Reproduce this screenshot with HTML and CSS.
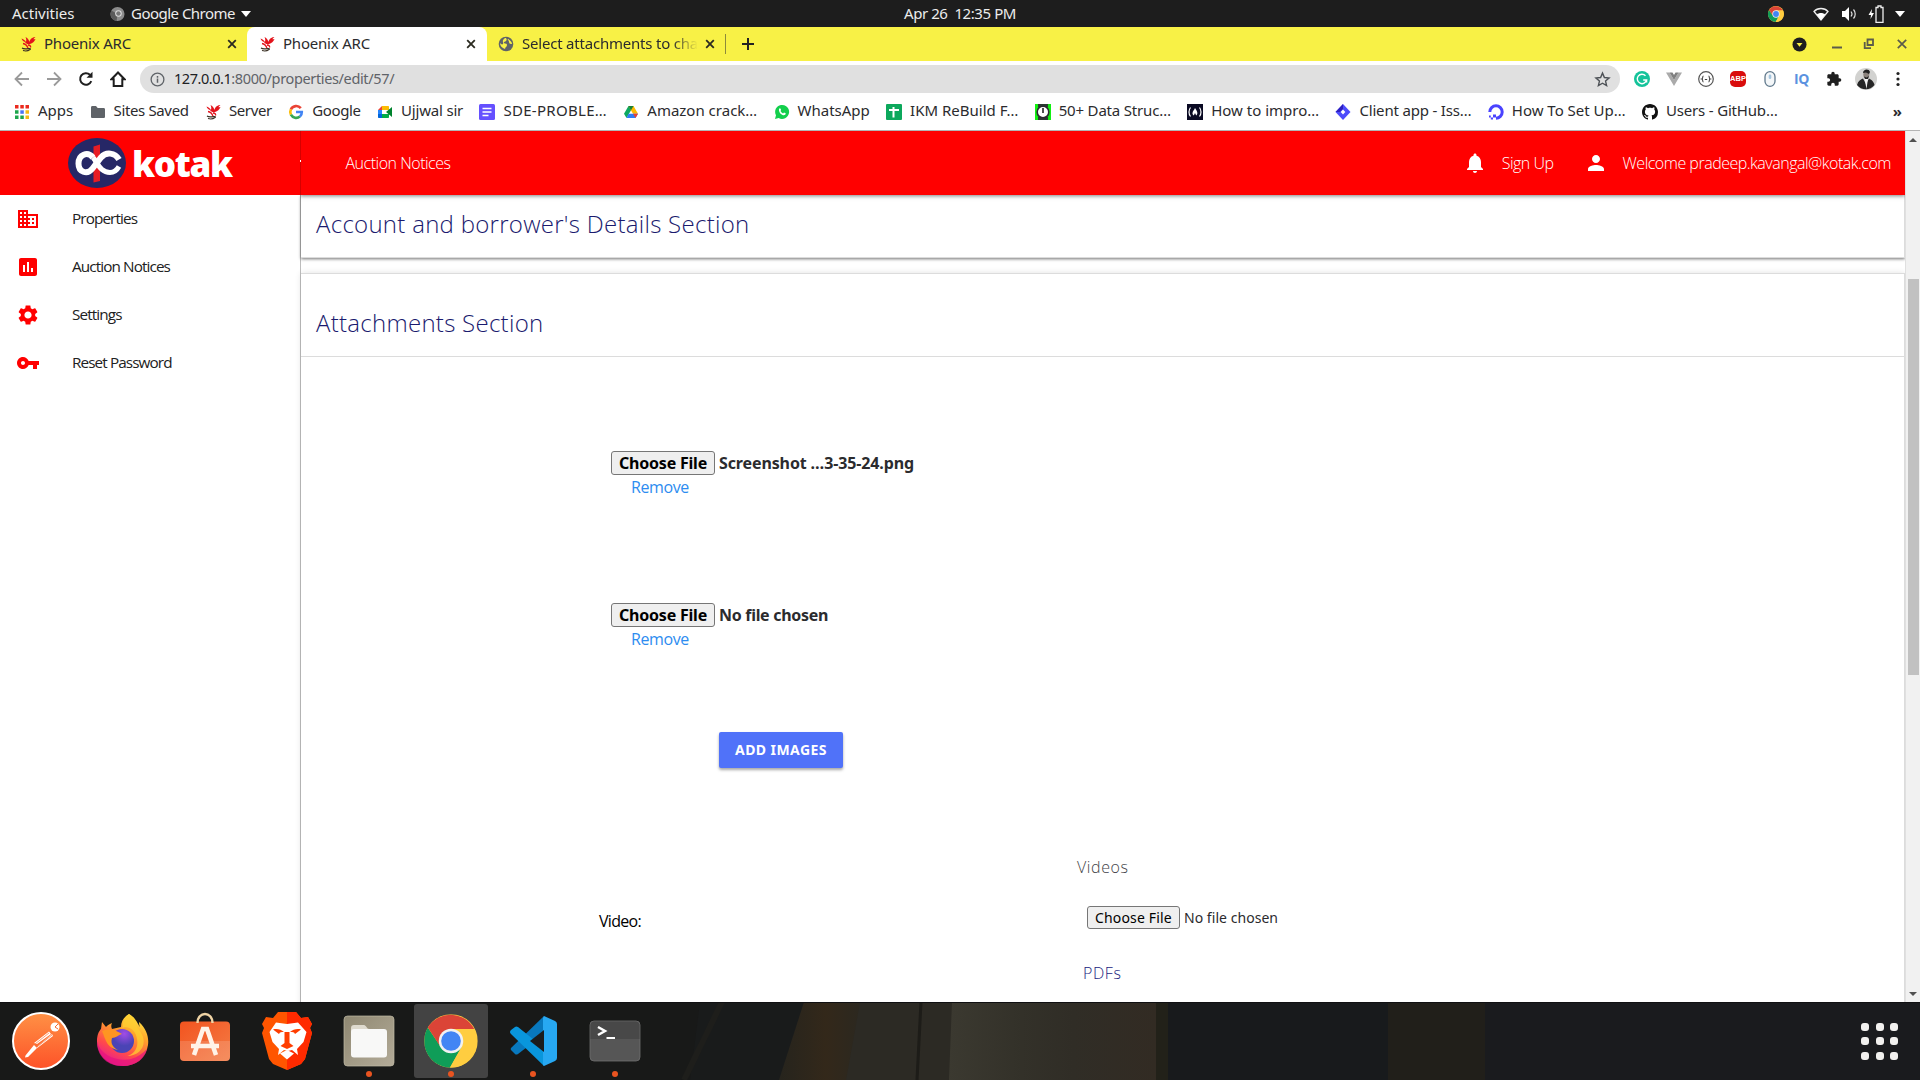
FILE: index.html
```html
<!DOCTYPE html>
<html lang="en">
<head>
<meta charset="utf-8">
<title>Phoenix ARC</title>
<link rel="stylesheet" href="styles.css">
</head>
<body>
<svg class="defs" width="0" height="0" aria-hidden="true">
  <symbol id="phoenix" viewBox="0 0 16 16"><path d="M1.500 2.500C3 3 5 4 6 6c.5-2 .3-3.500-.5-5C8 2 9 4 9.300 6 10 3.500 12 1 15.500 1c-1.200.8-1.800 1.500-2 2.300.8-.2 1.300 0 2-.2-1 2.400-3 4.400-5.500 5-2.500.6-4-.3-5-2C3.500 5.500 2 4.500 1.500 2.500z" fill="#e3131b"/><path d="M3 7.500c2 .3 4 2 5 4.500M8 9c2 0 3 1 2.500 2.500" fill="none" stroke="#e3131b" stroke-width="1.300"/><path d="M2 12c2 1.500 5 .8 7 .5 1-.2 2 .3 1 1-2 1.500-4.500 1.800-7 1" fill="none" stroke="#3a3024" stroke-width="1.100"/></symbol>
  <symbol id="chrome" viewBox="0 0 48 48"><circle cx="24" cy="24" r="24" fill="#ffcd40"/><path d="M24 24 3.200 12A24 24 0 0 1 44.800 13.200H24z" fill="#db4437"/><path d="M3.200 12A24 24 0 0 0 23 48L33.500 29.500 24 24 14 28z" fill="#0f9d58"/><path d="M24 13.200H44.800A24 24 0 0 1 23 48l10.400-18.600z" fill="#ffcd40"/><path d="M3.200 12 13.800 28 24 13.200z" fill="#db4437"/><circle cx="24" cy="24" r="11" fill="#f1f1f1"/><circle cx="24" cy="24" r="8.800" fill="#4285f4"/></symbol>
  <symbol id="close" viewBox="0 0 10 10"><path d="M1.200 1.200l7.600 7.600M8.800 1.200 1.200 8.800" stroke="currentColor" stroke-width="1.800"/></symbol>
</svg>

<header class="sysbar ui">
  <span class="activities">Activities</span>
  <span class="appmenu"><svg class="app-ico" viewBox="0 0 16 16"><circle cx="8" cy="8" r="7.500" fill="#8c8c8c"/><path d="M8 8 1.500 4.300A7.500 7.500 0 0 0 7 15.400z" fill="#5b5b5b"/><circle cx="9" cy="7.500" r="3.500" fill="#ddd"/><circle cx="9" cy="7.500" r="2.400" fill="#777"/></svg><span>Google Chrome</span><svg class="caret" viewBox="0 0 10 6"><path d="M0 0h10L5 6z" fill="#fff"/></svg></span>
  <span class="clock">Apr 26&nbsp; 12:35 PM</span>
  <span class="tray">
    <svg class="t-chrome"><use href="#chrome"/></svg>
    <svg class="t-wifi" viewBox="0 0 16 14"><path d="M1 4.500C4.500.5 11.500.5 15 4.500L8 13z" fill="none" stroke="#eee" stroke-width="1.300"/><path d="M3.800 7.500c2-2 6.400-2 8.400 0L8 13z" fill="#fff"/></svg>
    <svg class="t-vol" viewBox="0 0 16 16"><path d="M1 5h3l4-4v14l-4-4H1z" fill="#fff"/><path d="M10 5.500c1.200 1.500 1.200 3.500 0 5M12.500 3.500c2.300 2.500 2.300 6.500 0 9" fill="none" stroke="#ddd" stroke-width="1.200"/></svg>
    <svg class="t-bat" viewBox="0 0 16 20"><path d="M4 5 .5 11H3l-.5 4L6 9H3.500z" fill="#fff"/><path d="M8 3.500h2V2h3v1.500h2v14.800H8z" fill="none" stroke="#eee" stroke-width="1.300"/></svg>
    <svg class="caret" viewBox="0 0 10 6"><path d="M0 0h10L5 6z" fill="#fff"/></svg>
  </span>
</header>

<nav class="tabs ui">
  <div class="tab"><svg class="fav"><use href="#phoenix"/></svg><span class="tab-title">Phoenix ARC</span><svg class="x"><use href="#close"/></svg></div>
  <div class="tab active"><svg class="fav"><use href="#phoenix"/></svg><span class="tab-title">Phoenix ARC</span><svg class="x"><use href="#close"/></svg></div>
  <div class="tab last"><svg class="fav" viewBox="0 0 16 16"><circle cx="8" cy="8" r="7.300" fill="#5f6368"/><path d="M7 2c2 0 2 2 1 3s-3 1-2 2 3 0 3 2-2 2-2 4C4 12 2 10 2 7c1 1 2 2 3 1S3 5 7 2zM10 3c2 1 4 3 4 5-1 0-3 0-3-2s-2-2-1-3z" fill="#f8f146"/></svg><span class="tab-title fade">Select attachments to cha</span><svg class="x"><use href="#close"/></svg></div>
  <span class="tab-sep"></span>
  <svg class="plus" viewBox="0 0 12 12"><path d="M6 0v12M0 6h12" stroke="#222" stroke-width="2"/></svg>
  <div class="winctl">
    <svg class="w-search" viewBox="0 0 16 16"><circle cx="8" cy="8" r="7.500" fill="#1d1d1f"/><path d="M4.800 6.300h6.400L8 10.500z" fill="#f8f146"/></svg>
    <svg class="w-min" viewBox="0 0 12 12"><path d="M1 9.500h10" stroke="#5c5c4a" stroke-width="2"/></svg>
    <svg class="w-max" viewBox="0 0 12 12"><path d="M4.500 1.500h5.500v5.500H4.500zM1.700 4v6.200H8" fill="none" stroke="#5c5c4a" stroke-width="1.800"/></svg>
    <svg class="w-close" viewBox="0 0 10 10"><path d="M.8.8l8.400 8.400M9.200.8.8 9.200" stroke="#5c5c4a" stroke-width="1.700"/></svg>
  </div>
</nav>

<div class="toolbar ui">
  <svg class="nav-ico" viewBox="0 0 16 16"><path d="M15 8H2M8 1.500 1.500 8 8 14.500" fill="none" stroke="#9a9a9a" stroke-width="1.800"/></svg>
  <svg class="nav-ico" viewBox="0 0 16 16"><path d="M1 8h13M8 1.500 14.500 8 8 14.500" fill="none" stroke="#9a9a9a" stroke-width="1.800"/></svg>
  <svg class="nav-ico" viewBox="0 0 16 16"><path d="M13.300 10.200A5.800 5.800 0 1 1 12 3.800" fill="none" stroke="#1f1f1f" stroke-width="2"/><path d="M14.500.8v6H8.500z" fill="#1f1f1f"/></svg>
  <svg class="nav-ico" viewBox="0 0 16 16"><path d="M8 1.500 1.500 8.200h2.200V15h8.600V8.200h2.200z" fill="none" stroke="#1f1f1f" stroke-width="2"/></svg>
  <div class="omnibox">
    <svg class="info" viewBox="0 0 16 16"><circle cx="8" cy="8" r="6.800" fill="none" stroke="#5f6368" stroke-width="1.400"/><path d="M8 7v4.500M8 4.300V6" stroke="#5f6368" stroke-width="1.600"/></svg>
    <span class="url"><b>127.0.0.1</b>:8000/properties/edit/57/</span>
    <svg class="star" viewBox="0 0 24 24"><path d="M12 3l2.700 6.200 6.600.6-5 4.400 1.500 6.500L12 17.300l-5.800 3.400 1.500-6.500-5-4.400 6.600-.6z" fill="none" stroke="#4d5156" stroke-width="2"/></svg>
  </div>
  <div class="exts">
    <svg viewBox="0 0 16 16"><circle cx="8" cy="8" r="8" fill="#14c39a"/><path d="M11.500 4.800A4.700 4.700 0 1 0 12.600 9H9.200M12.600 9v2.500" fill="none" stroke="#fff" stroke-width="1.400"/></svg>
    <svg viewBox="0 0 16 16"><path d="M0 1.500h3.500L8 9l4.500-7.500H16L8 15z" fill="#aaa"/><path d="M3.500 1.500h3L8 4l1.500-2.500h3L8 9z" fill="#808080"/></svg>
    <svg viewBox="0 0 16 16"><circle cx="8" cy="8" r="7.300" fill="none" stroke="#555" stroke-width="1.200"/><path d="M5.500 5C4 5 5.500 7.500 3.800 8c1.700.5.200 3 1.700 3M10.500 5c1.500 0 0 2.500 1.700 3-1.700.5-.2 3-1.700 3M6.800 8.500h2.400" fill="none" stroke="#444" stroke-width="1.100"/></svg>
    <span class="abp">ABP</span>
    <svg viewBox="0 0 16 16"><rect x="3" y=".7" width="10" height="14.600" rx="5" fill="#f4f7f9" stroke="#60798c" stroke-width="1.300"/><rect x="6.700" y="3.500" width="2.600" height="4.500" rx="1.300" fill="#a3c4dd"/></svg>
    <span class="iq">IQ</span>
    <svg viewBox="0 0 24 24"><path d="M20.500 11H19V7c0-1.100-.9-2-2-2h-4V3.500a2.500 2.500 0 0 0-5 0V5H4c-1.100 0-2 .9-2 2v3.800h1.500a2.700 2.700 0 0 1 0 5.400H2V20c0 1.100.9 2 2 2h3.800v-1.500a2.700 2.700 0 0 1 5.400 0V22H17c1.100 0 2-.9 2-2v-4h1.500a2.500 2.500 0 0 0 0-5z" fill="#1f1f1f"/></svg>
    <svg class="avatar" viewBox="0 0 22 22"><circle cx="11" cy="11" r="11" fill="#d2d2d0"/><path d="M2 17c1-4 4-6 6-6.500L11 16l3-5.500c2 1 5 3 5.500 6.500A11 11 0 0 1 2 17z" fill="#262626"/><path d="M9.500 10.500h3.500L11.500 21z" fill="#f4f4f4"/><ellipse cx="11.300" cy="6.500" rx="3" ry="4" fill="#8b837d"/><path d="M8 5c0-4 6-5 7-1l-1 2-3-1.500zM9 8.500l2.500 1L14 8l-1 3h-3z" fill="#222"/></svg>
    <svg viewBox="0 0 16 16"><circle cx="8" cy="2.500" r="1.600" fill="#222"/><circle cx="8" cy="8" r="1.600" fill="#222"/><circle cx="8" cy="13.500" r="1.600" fill="#222"/></svg>
  </div>
</div>

<div class="bookmarks ui">
  <span class="bm"><svg viewBox="0 0 16 16"><path d="M1 1h3.500v3.500H1zM6.300 1h3.500v3.500H6.300zM11.500 1H15v3.500h-3.500z" fill="#ea2a1e"/><path d="M1 6.300h3.500v3.500H1zM1 11.500h3.500V15H1zM6.300 11.500h3.500V15H6.300z" fill="#1da54b"/><path d="M6.300 6.300h3.500v3.500H6.300z" fill="#4a74f5"/><path d="M11.500 6.300H15v3.500h-3.500zM11.500 11.500H15V15h-3.500z" fill="#f5b914"/></svg>Apps</span>
  <span class="bm tight"><svg viewBox="0 0 16 16"><path d="M1 3.500C1 2.700 1.500 2 2.300 2H6l1.700 2h6c.7 0 1.300.6 1.300 1.300v7.400c0 .7-.6 1.300-1.300 1.300H2.300c-.7 0-1.300-.6-1.300-1.300z" fill="#5f6368"/></svg>Sites Saved</span>
  <span class="bm tight"><svg><use href="#phoenix"/></svg>Server</span>
  <span class="bm tight"><svg viewBox="0 0 16 16"><g fill="none" stroke-width="2.600"><path d="M12.800 4.200A6 6 0 0 0 2.900 5.300" stroke="#ea4335"/><path d="M2.900 5.300a6 6 0 0 0 0 5.400" stroke="#fbbc05"/><path d="M2.900 10.700a6 6 0 0 0 9 1.900" stroke="#34a853"/><path d="M11.900 12.600A6 6 0 0 0 13.800 8H8" stroke="#4285f4"/></g></svg>Google</span>
  <span class="bm snug"><svg viewBox="0 0 16 16"><path d="M1 6l4-4v4z" fill="#ea4335"/><path d="M5 2h6c.6 0 1 .4 1 1v3H5z" fill="#fbbc04"/><path d="M1 6h4v4H1z" fill="#2684fc"/><path d="M1 10h4v4H2c-.6 0-1-.4-1-1z" fill="#0066da"/><path d="M5 10h7v3c0 .6-.4 1-1 1H5z" fill="#00ac47"/><path d="M9 8l6-5v10z" fill="#00832d"/></svg>Ujjwal sir</span>
  <span class="bm wide"><svg viewBox="0 0 16 16"><rect width="16" height="16" rx="1.500" fill="#6550ff"/><path d="M3.500 4.500h9M3.500 8h9M3.500 11.500h6" stroke="#fff" stroke-width="1.600"/></svg>SDE-PROBLE…</span>
  <span class="bm"><svg viewBox="0 0 16 16"><path d="M5.500 2h5L8 6.300 3.500 14 1 9.800z" fill="#0da960"/><path d="M5.500 2h5l4.500 7.800h-5z" fill="#ffba00"/><path d="M5.500 9.800H15L12.500 14h-9z" fill="#2f7df6"/><path d="M5.500 2h5L8 6.300z" fill="#188038"/><path d="M10 9.800h5L12.500 14z" fill="#ea4335"/></svg>Amazon crack…</span>
  <span class="bm"><svg viewBox="0 0 16 16"><path d="M1 15l1-3.700a7 7 0 1 1 2.700 2.700z" fill="#13cf4c"/><path d="M5 5c.5-1 1.300-1 1.600-.2l.5 1.300-.6.9c.7 1.200 1.500 1.900 2.600 2.400l.9-.9 1.700.8c.3 1.500-1.700 2.300-3.200 1.700C6.500 10.200 4.600 7.500 5 5z" fill="#fff"/></svg>WhatsApp</span>
  <span class="bm"><svg viewBox="0 0 16 16"><rect width="16" height="16" rx="1" fill="#0ca85c"/><path d="M3 6h10M7.500 3v10.500" stroke="#fff" stroke-width="2"/></svg>IKM ReBuild F…</span>
  <span class="bm snug"><svg viewBox="0 0 16 16"><path d="M0 0h16v16H0z" fill="#12f012"/><path d="M3 0h10v3H3zM3 13h10v3H3z" fill="#2c3a32"/><circle cx="8" cy="8" r="5.800" fill="#fff" stroke="#2a2a30" stroke-width="1.600"/><path d="M8 4v5" stroke="#222" stroke-width="1.600"/></svg>50+ Data Struc…</span>
  <span class="bm"><svg viewBox="0 0 16 16"><path d="M0 0h16v16H0z" fill="#0a0a23"/><path d="M3.500 3.500C1.500 6 1.500 10 3.500 12.500M12.500 3.500c2 2.500 2 6.500 0 9" fill="none" stroke="#fff" stroke-width="1.200"/><path d="M8 4c-.5 2-2.500 3-2.500 5.200 0 1 .5 1.800 1.300 2.300L8 9l1.200 2.500c2.500-2 .5-5-1.200-7.500z" fill="#fff"/></svg>How to impro…</span>
  <span class="bm snug"><svg viewBox="0 0 16 16"><path d="M8 0l7.500 8L8 16 .5 8z" fill="#4d4cfb"/><path d="M8 0v5L5 8H.5z" fill="#2d1fc0"/><path d="M8 5.500 10.300 8 8 10.500 5.700 8z" fill="#fff"/></svg>Client app - Iss…</span>
  <span class="bm"><svg viewBox="0 0 16 16"><path d="M8 14.200a6.200 6.200 0 1 0-6.200-6.200" fill="none" stroke="#4a43ff" stroke-width="3"/><path d="M5 10.500h3v3H5zM2.800 13.500H5v2H2.800zM1 11.500h1.800v2H1z" fill="#4a43ff"/></svg>How To Set Up…</span>
  <span class="bm snug"><svg viewBox="0 0 16 16"><path d="M8 0C3.580 0 0 3.580 0 8c0 3.540 2.290 6.530 5.470 7.590.4.070.55-.17.55-.38 0-.19-.01-.82-.01-1.490-2.010.37-2.530-.49-2.690-.94-.09-.23-.48-.94-.82-1.130-.28-.15-.68-.52-.01-.53.63-.01 1.080.58 1.230.82.72 1.210 1.870.87 2.330.66.07-.52.28-.87.51-1.070-1.780-.2-3.640-.89-3.640-3.950 0-.87.31-1.590.82-2.150-.08-.2-.36-1.020.08-2.120 0 0 .67-.21 2.200.82.64-.18 1.320-.27 2-.27s1.360.09 2 .27c1.530-1.040 2.200-.82 2.200-.82.44 1.100.16 1.920.08 2.120.51.56.82 1.270.82 2.150 0 3.070-1.870 3.750-3.650 3.950.29.25.54.73.54 1.480 0 1.070-.01 1.930-.01 2.200 0 .21.15.46.55.38A8.010 8.010 0 0 0 16 8c0-4.420-3.580-8-8-8z" fill="#111"/></svg>Users - GitHub…</span>
  <span class="more">»</span>
</div>

<div class="page">
  <aside class="side">
    <div class="brand">
      <svg class="mark" viewBox="0 0 58 50"><ellipse cx="29" cy="25" rx="29" ry="25" fill="#262766"/><path d="M25.500 8.500 32 6.500v36.500l-6.500 1.500z" fill="#e81c24"/><path d="M25 19.500C30 25 32 34.500 42 34.500c4 0 6.500-1.500 9-6" fill="none" stroke="#fff" stroke-width="5"/><path d="M51 21.500C47 14.500 38 13.500 33 19.500L24.500 30.500C19 37.500 10.500 34 10.500 25.500c0-9 9-12.500 14.500-6" fill="none" stroke="#fff" stroke-width="6"/></svg>
      <span class="brand-name">kotak</span>
    </div>
    <a class="side-item"><svg viewBox="0 0 24 24"><path d="M12 7V3H2v18h20V7H12zM6 19H4v-2h2v2zm0-4H4v-2h2v2zm0-4H4V9h2v2zm0-4H4V5h2v2zm4 12H8v-2h2v2zm0-4H8v-2h2v2zm0-4H8V9h2v2zm0-4H8V5h2v2zm10 12h-8v-2h2v-2h-2v-2h2v-2h-2V9h8v10zm-2-8h-2v2h2v-2zm0 4h-2v2h2v-2z"/></svg><span>Properties</span></a>
    <a class="side-item"><svg viewBox="0 0 24 24"><path d="M19 3H5c-1.100 0-2 .9-2 2v14c0 1.100.9 2 2 2h14c1.100 0 2-.9 2-2V5c0-1.100-.9-2-2-2zM9 17H7v-7h2v7zm4 0h-2V7h2v10zm4 0h-2v-4h2v4z"/></svg><span>Auction Notices</span></a>
    <a class="side-item"><svg viewBox="0 0 24 24"><path d="M19.140 12.940c.04-.3.060-.61.060-.94 0-.32-.02-.64-.07-.94l2.030-1.580c.18-.14.23-.41.12-.61l-1.920-3.320c-.12-.22-.37-.29-.59-.22l-2.390.96c-.5-.38-1.030-.7-1.620-.94l-.36-2.540c-.04-.24-.24-.41-.48-.41h-3.840c-.24 0-.43.17-.47.41l-.36 2.540c-.59.24-1.130.57-1.620.94l-2.390-.96c-.22-.08-.47 0-.59.22L2.740 8.870c-.12.21-.08.47.12.61l2.030 1.580c-.05.3-.09.63-.09.94s.02.64.07.94l-2.030 1.580c-.18.14-.23.41-.12.61l1.920 3.320c.12.22.37.29.59.22l2.390-.96c.5.38 1.030.7 1.620.94l.36 2.540c.05.24.24.41.48.41h3.840c.24 0 .44-.17.47-.41l.36-2.540c.59-.24 1.130-.56 1.620-.94l2.390.96c.22.08.47 0 .59-.22l1.920-3.320c.12-.22.07-.47-.12-.61l-2.010-1.580zM12 15.600c-1.980 0-3.600-1.620-3.600-3.600s1.620-3.600 3.600-3.600 3.600 1.620 3.600 3.600-1.620 3.600-3.600 3.600z"/></svg><span>Settings</span></a>
    <a class="side-item"><svg viewBox="0 0 24 24"><path d="M12.650 10C11.830 7.670 9.610 6 7 6c-3.310 0-6 2.690-6 6s2.690 6 6 6c2.610 0 4.830-1.670 5.650-4H17v4h4v-4h2v-4H12.650zM7 14c-1.100 0-2-.9-2-2s.9-2 2-2 2 .9 2 2-.9 2-2 2z"/></svg><span>Reset Password</span></a>
  </aside>

  <main class="main">
    <header class="topnav">
      <span class="tick"></span>
      <span class="nav-left">Auction Notices</span>
      <svg class="bell" viewBox="0 0 24 24"><path d="M12 22c1.100 0 2-.9 2-2h-4c0 1.100.89 2 2 2zm6-6v-5c0-3.070-1.640-5.640-4.500-6.320V4c0-.83-.67-1.500-1.500-1.500s-1.500.67-1.500 1.500v.68C7.630 5.360 6 7.920 6 11v5l-2 2v1h16v-1l-2-2z"/></svg>
      <span class="signup">Sign Up</span>
      <svg class="person" viewBox="0 0 24 24"><path d="M12 12c2.210 0 4-1.790 4-4s-1.790-4-4-4-4 1.790-4 4 1.790 4 4 4zm0 2c-2.670 0-8 1.340-8 4v2h16v-2c0-2.660-5.330-4-8-4z"/></svg>
      <span class="welcome">Welcome pradeep.kavangal@kotak.com</span>
    </header>
    <section class="card account"><h2>Account and borrower's Details Section</h2></section>
    <section class="card attach">
      <h2>Attachments Section</h2>
      <div class="attach-body">
        <div class="upload">
          <div class="file strong ui"><span class="choose">Choose File</span><span class="filename long">Screenshot …3-35-24.png</span></div>
          <a class="remove">Remove</a>
        </div>
        <div class="upload">
          <div class="file strong ui"><span class="choose">Choose File</span><span class="filename">No file chosen</span></div>
          <a class="remove">Remove</a>
        </div>
        <div class="add ui">ADD IMAGES</div>
        <div class="media">
          <div class="video-label">Video:</div>
          <div class="media-files">
            <p class="videos">Videos</p>
            <div class="file light ui"><span class="choose">Choose File</span><span class="filename">No file chosen</span></div>
            <p class="pdfs">PDFs</p>
          </div>
        </div>
      </div>
    </section>
  </main>
  <div class="scroll"><svg viewBox="0 0 8 4"><path d="M0 4h8L4 0z" fill="#505050"/></svg><div class="thumb"></div><svg class="down" viewBox="0 0 8 4"><path d="M0 0h8L4 4z" fill="#505050"/></svg></div>
</div>

<footer class="dock">
  <svg class="wall" viewBox="0 0 1920 78" preserveAspectRatio="none">
    <defs><linearGradient id="w1"><stop offset="0" stop-color="#26241d"/><stop offset=".55" stop-color="#33281a"/><stop offset="1" stop-color="#2b2820"/></linearGradient><linearGradient id="w2"><stop offset="0" stop-color="#3b3930"/><stop offset=".35" stop-color="#333129"/><stop offset=".6" stop-color="#302d26"/><stop offset="1" stop-color="#322b23"/></linearGradient></defs>
    <path d="M0 0h1920v78H0z" fill="#181918"/><path d="M700 0h110l-30 78h-90z" fill="#191b1b"/><path d="M722 0l-38 78" stroke="#1e1e1b" stroke-width="6"/>
    <path d="M804 0h60l-12 78h-73z" fill="url(#w1)"/><path d="M860 0h92v78H846z" fill="#2c2a24"/><path d="M921 0l-4 78" stroke="#1d1c18" stroke-width="3"/><path d="M952 0h204v78H949z" fill="url(#w2)"/><path d="M1156 0h12v78h-12z" fill="#222119"/><path d="M1168 0h220v78h-220z" fill="#181a1c"/><path d="M1388 0h97v78h-97z" fill="#211f1a"/><path d="M1485 0h435v78h-435z" fill="#1a1b1e"/><path d="M0 .5h1920" stroke="#101012"/>
  </svg>
  <div class="slot"><svg viewBox="0 0 58 58"><defs><linearGradient id="pm" x2="0" y2="1"><stop stop-color="#ff9145"/><stop offset="1" stop-color="#fd5228"/></linearGradient></defs><circle cx="29" cy="29" r="28" fill="url(#pm)" stroke="#fff" stroke-width="2"/><circle cx="43" cy="15" r="4.500" fill="#fff"/><path d="M43 15l3-3M43 15l3 2" stroke="#f76b34"/><path d="M37 19.500 22 31l3 1 14-10zM40 22 26 34l-2 3 17-13zM22 33l3 3-9 9-3 .5.5-2z" fill="#fff"/><path d="M37 21 23 32M40 23 25 35" stroke="#f97739" stroke-width=".7"/></svg></div>
  <div class="slot"><svg viewBox="0 0 58 58"><defs><linearGradient id="ff" x1=".8" y1="0" x2=".3" y2="1"><stop stop-color="#fff044"/><stop offset=".35" stop-color="#ffa12b"/><stop offset=".7" stop-color="#ff4a4b"/><stop offset="1" stop-color="#e5159a"/></linearGradient><radialGradient id="fg" cx=".6" cy=".2"><stop stop-color="#a24be8"/><stop offset="1" stop-color="#4a44b5"/></radialGradient></defs><path d="M35 2c7 4 8 9 11 13-1-2-1-4-1-5 8 7 10 16 9 23C52 46 42 54 29 54 14 54 3 43 3 29c0-6 2-10 4-12l1-7 4 5c1-1 3-3 6-4-1 2-1 4 0 6l9-2c0-6 3-10 8-13z" fill="url(#ff)"/><path d="M26 54C12 53 3 43 3 30c4 14 21 20 34 17 7-2 12-6 16-10-2 11-14 18-27 17z" fill="#e4127f" opacity=".7"/><circle cx="28" cy="29" r="12" fill="url(#fg)"/><path d="M8 19c7-3 14-1 20 3-4 1-6 4-10 4-2 6 2 10 6 12C12 36 11 25 8 19z" fill="#ff9522"/><path d="M26 17c9-5 16 2 17 10 2 9-4 16-10 17 12 0 19-9 16-19-2-7-7-8-8-17-1-2-3-4-6-6-4 3-7 8-6 13z" fill="#ffcf31" opacity=".75"/></svg></div>
  <div class="slot"><svg viewBox="0 0 58 58"><defs><linearGradient id="sw" x2="1" y2="1"><stop stop-color="#f2541f"/><stop offset="1" stop-color="#f47c46"/></linearGradient></defs><rect x="4" y="9.500" width="50" height="39.500" rx="4" fill="url(#sw)"/><path d="M21.500 11c0-12 15-12 15 0" fill="none" stroke="#efd4a5" stroke-width="2.500"/><path d="M4 29h50v16a4 4 0 0 1-4 4H8a4 4 0 0 1-4-4z" fill="#fff" opacity=".14"/><path d="M18 43l9-26h4l9 26M15 34h28" fill="none" stroke="#fff3e8" stroke-width="4.500"/></svg></div>
  <div class="slot"><svg viewBox="0 0 58 58"><path d="M20 0h18l5 6 7-1 4 7-2 4 2 5-7 26-4 5-14 6-14-6-4-5L4 21l2-5-2-4 4-7 7 1z" fill="#ff5500"/><path d="M29 0h9l5 6 7-1 4 7-2 4 2 5-7 26-4 5-14 6z" fill="#ff2a00"/><path d="M18 10.500l11 1.500 11-1.500 8.500 9.500-3 10-6.500 7 1 6-6-5-4 1-4-1-6 5 1-6-6.500-7-3-10z" fill="#fff"/><path d="M15 17.500c4-1 8 0 11 2.500-3 0-4 0-5 2zM43 17.500c-4-1-8 0-11 2.500 3 0 4 0 5 2zM26.500 20h5v11l4 3-6.500 3-6.500-3 4-3z" fill="#ff3d00"/><path d="M29 38l7 3.500-7 6-7-6z" fill="#fff"/></svg></div>
  <div class="slot run"><svg viewBox="0 0 58 58"><defs><linearGradient id="fi" x2="1" y2="1"><stop stop-color="#8f8872"/><stop offset="1" stop-color="#b3ab98"/></linearGradient></defs><rect x="4" y="4" width="50" height="50" rx="3.500" fill="url(#fi)" stroke="#c2bba8" stroke-width=".7"/><path d="M11 16c0-2 1-3 3-3h10c2 0 3 4 5 4h14v8H11z" fill="#dedace"/><rect x="11" y="17" width="36" height="28.500" rx="3" fill="#f8f8f7"/></svg></div>
  <div class="slot run on"><svg viewBox="-2 -2 52 52"><use href="#chrome" width="48" height="48"/></svg></div>
  <div class="slot run code"><svg viewBox="0 0 58 58"><path d="M41 4 8 36a2 2 0 0 0 0 2l4 4q1 1 3 0L41 22z" fill="#0878bd"/><path d="M8 18l4-3q1-1 3 0l26 21v18L8 22q-2-2 0-4z" fill="#0996dc"/><path d="M41 4l11 5q2 1 2 3v34q0 2-2 3l-11 5-1-1V6z" fill="#27a8f2"/><path d="M41 18v22L27 29z" fill="#1b1c1c"/></svg></div>
  <div class="slot run"><svg viewBox="0 0 58 58"><rect x="4" y="9" width="50" height="40" rx="4" fill="#565656" stroke="#6e6e6e" stroke-width=".8"/><path d="M4.500 27V13a4 4 0 0 1 4-3.500h41a4 4 0 0 1 4 3.500v14z" fill="#484848"/><path d="M12 15l7 4-7 4" fill="none" stroke="#fff" stroke-width="2.500"/><path d="M20.500 26H29" stroke="#fff" stroke-width="2"/></svg></div>
  <div class="grid9"><i></i><i></i><i></i><i></i><i></i><i></i><i></i><i></i><i></i></div>
</footer>
</body>
</html>
```
FILE: styles.css
```css
* { box-sizing: border-box; }
body {
  margin: 0;
  width: 1920px;
  height: 1080px;
  overflow: hidden;
  display: flex;
  flex-direction: column;
  background: #fff;
  font-family: "Open Sans", "Noto Sans", sans-serif;
  font-size: 16px;
  white-space: nowrap;
}
svg { display: block; flex: none; }
h2, p { margin: 0; }
.defs { position: absolute; }
.ui { font-family: "Noto Sans", "Open Sans", sans-serif; font-size: 15px; color: #2b2b2e; }

/* system bar */
.sysbar {
  height: 27px;
  background: #1d1d1d;
  color: #ececec;
  display: grid;
  grid-template-columns: 98px 806px 1fr auto;
  align-items: center;
  padding: 0 15px 0 12px;
}
.sysbar span { line-height: 24px; height: 26px; }
.appmenu { display: flex; align-items: center; gap: 6px; letter-spacing: -.52px; }
.app-ico { width: 15px; height: 16px; }
.caret { width: 10px; height: 6px; }
.clock { margin-left: -12px; letter-spacing: -.425px; }
.tray { display: flex; align-items: center; }
.t-chrome { width: 16px; height: 16px; margin-right: 29px; }
.t-wifi { width: 16px; height: 14px; margin-right: 12px; }
.t-vol { width: 16px; height: 16px; margin-right: 11px; }
.t-bat { width: 16px; height: 20px; margin-right: 11px; }

/* tab strip */
.tabs { height: 34px; background: #f8f146; display: flex; align-items: center; }
.tab { height: 34px; display: flex; align-items: center; width: 247px; padding: 0 10px 0 20px; }
.tab.active { width: 240px; padding: 0 11px 0 12px; background: #fff; border-radius: 8px 8px 0 0; }
.tab.last { width: 238px; padding: 0 10px 0 11px; }
.fav { width: 16px; height: 16px; margin-right: 8px; }
.tab-title { flex: 1; line-height: 32px; height: 34px; letter-spacing: -.21px; }
.tab .x { width: 10px; height: 10px; color: #2b2b20; }
.fade { mask-image: linear-gradient(90deg, #000 82%, transparent 96%); }
.tab-sep { width: 1px; height: 20px; background: #8d8a3a; }
.plus { width: 12px; height: 12px; margin-left: 16px; }
.winctl { margin-left: auto; display: flex; align-items: center; margin-right: 13px; }
.w-search { width: 15px; height: 15px; margin-right: 24px; }
.w-min { width: 12px; height: 12px; margin-right: 20px; }
.w-max { width: 12px; height: 12px; margin-right: 22px; }
.w-close { width: 10px; height: 10px; }

/* toolbar */
.toolbar { height: 36px; display: flex; align-items: center; padding-left: 14px; }
.nav-ico { width: 16px; height: 16px; margin-right: 16px; }
.nav-ico:nth-of-type(4) { margin-right: 14px; }
.omnibox { width: 1480px; height: 28px; border-radius: 14px; background: #e0e0e0; display: flex; align-items: center; padding: 0 9px 0 10px; }
.info { width: 15px; height: 15px; margin-right: 9px; }
.url { flex: 1; color: #5f6368; font-size: 14.5px; line-height: 27px; height: 28px; letter-spacing: -.36px; }
.url b { font-weight: 400; color: #202124; letter-spacing: -.46px; }
.star { width: 17px; height: 17px; }
.exts { display: flex; align-items: center; gap: 16px; margin-left: 14px; }
.exts > * { width: 16px; height: 16px; }
.exts .avatar { width: 22px; height: 22px; margin: 0 -3px; }
.abp { border-radius: 5px; background: #d90d0d; color: #fff; font: bold 7.5px/16px "Liberation Sans", sans-serif; text-align: center; }
.iq { color: #5b92e0; font: bold 14px/16px "Open Sans", sans-serif; letter-spacing: -.5px; }

/* bookmarks */
.bookmarks { height: 34px; display: flex; align-items: center; padding: 0 18px 6px 14px; border-bottom: 1px solid #b4b4b4; }
.bm { display: flex; align-items: center; gap: 8px; margin-right: 16.3px; line-height: 27px; }
.bm svg { width: 16px; height: 16px; position: relative; top: 1px; }
.bm.tight { letter-spacing: -.36px; }
.bm.snug { letter-spacing: -.18px; }
.bm.wide { letter-spacing: .3px; }
.more { margin-left: auto; font-weight: 700; }

/* page */
.page { height: 871px; display: flex; overflow: hidden; }
.side { width: 300px; }
.brand { height: 64px; background: #f00; display: flex; align-items: center; padding-left: 68px; }
.mark { width: 58px; height: 50px; margin-right: 6px; }
.brand-name { color: #fff; font-size: 35px; font-weight: 800; line-height: 64px; height: 62px; letter-spacing: -1.3px; }
.side-item { height: 48px; display: flex; align-items: center; padding-left: 16px; color: #212121; font-size: 15.3px; line-height: 46px; letter-spacing: -.9px; }
.side-item svg { width: 24px; height: 24px; margin-right: 32px; fill: #f00; }
.side-item span { height: 48px; }
.main { width: 1605px; background: linear-gradient(90deg, #bdbdbd 1px, #fff 1px); display: flex; flex-direction: column; }
.topnav { height: 64px; flex: none; background: #f00; color: #fff; display: flex; align-items: center; padding-right: 14px; line-height: 64px; position: relative; box-shadow: 0 1px 4px rgba(0,0,0,.5); clip-path: inset(0 0 -8px 0); border-left: 1px solid #d60000; letter-spacing: -.49px; font-weight: 300; }
.topnav svg { width: 24px; height: 24px; fill: #fff; }
.tick { width: 1px; height: 2px; background: #fff; margin: 0 0 4px -1px; }
.nav-left { margin: 0 auto 0 44.500px; }
.bell { margin-right: 15px; }
.signup { margin-right: 30px; }
.person { margin-right: 15px; }
.card { margin-left: 1px; border: 1px solid #dcdcdc; border-left: 0; background: #fff; }
.card h2 { color: #1a1a6e; font-size: 24px; font-weight: 300; padding-left: 15px; letter-spacing: .28px; }
.account { height: 63px; flex: none; border-top: 0; box-shadow: 0 1px 3px rgba(0,0,0,.55); }
.account h2 { line-height: 58px; }
.attach { margin-top: 15px; height: 760px; flex: none; box-shadow: 0 0 6px rgba(0,0,0,.12); }
.attach h2 { height: 83px; line-height: 98px; border-bottom: 1px solid #dcdcdc; }
.attach-body { padding: 94px 0 0 310px; }
.upload { margin-bottom: 104px; }
.file { display: flex; gap: 4px; height: 24px; line-height: 22px; }
.choose { border: 1px solid #767676; border-radius: 3px; background: #efefef; color: #000; padding: 0 7px; }
.strong { font-size: 16px; font-weight: 700; letter-spacing: -.21px; }
.strong .filename { line-height: 24px; letter-spacing: -.3px; }
.strong .filename.long { letter-spacing: -.12px; }
.remove { display: block; padding-left: 20px; line-height: 24px; color: #2d8cf0; letter-spacing: -.4px; }
.add { margin: -23px 0 0 108px; width: 124px; height: 36px; border-radius: 2px; background: #5072f9; color: #fff; font-size: 14px; font-weight: 700; line-height: 36px; letter-spacing: .44px; text-align: center; box-shadow: 0 2px 3px rgba(0,0,0,.35); }
.media { display: grid; grid-template-columns: 478px 1fr; margin: 87px 0 0 -12px; line-height: 24px; }
.video-label { padding-top: 54px; color: #000; letter-spacing: -.7px; }
.videos { color: #3f3f48; font-weight: 300; letter-spacing: .6px; }
.light { margin: 27px 0 0 10px; height: 23px; font-size: 14px; line-height: 21px; letter-spacing: .05px; }
.light .choose { letter-spacing: .17px; }
.light .filename { line-height: 23px; }
.pdfs { margin: 32px 0 0 6px; color: #1a237e; font-weight: 300; letter-spacing: .58px; }

.scroll { width: 15px; background: #f1f1f1; border-left: 1px solid #e0e0e0; display: flex; flex-direction: column; align-items: center; padding: 7px 0 6px; }
.scroll svg { width: 8px; height: 4px; }
.thumb { width: 11px; height: 396px; background: #c1c1c1; margin-top: 137px; }
.down { margin-top: auto; }

/* dock */
.dock { height: 78px; position: relative; display: flex; align-items: center; background: #181918; }
.wall { position: absolute; inset: 0; width: 1920px; height: 78px; }
.slot { position: relative; width: 74px; height: 74px; margin: 0 4px; display: flex; align-items: center; justify-content: center; border-radius: 3px; }
.slot svg { width: 58px; height: 58px; }
.code svg { margin-left: -2px; }
.on { background: #434343; }
.run::after { content: ""; position: absolute; left: 34px; bottom: 1px; width: 6px; height: 6px; border-radius: 50%; background: #e95420; }
.grid9 { position: relative; margin: 0 22px 0 auto; display: grid; grid-template-columns: repeat(3, 8px); gap: 6.500px; }
.grid9 i { width: 8px; height: 8px; border-radius: 3px; background: #f2f1ef; }
```
